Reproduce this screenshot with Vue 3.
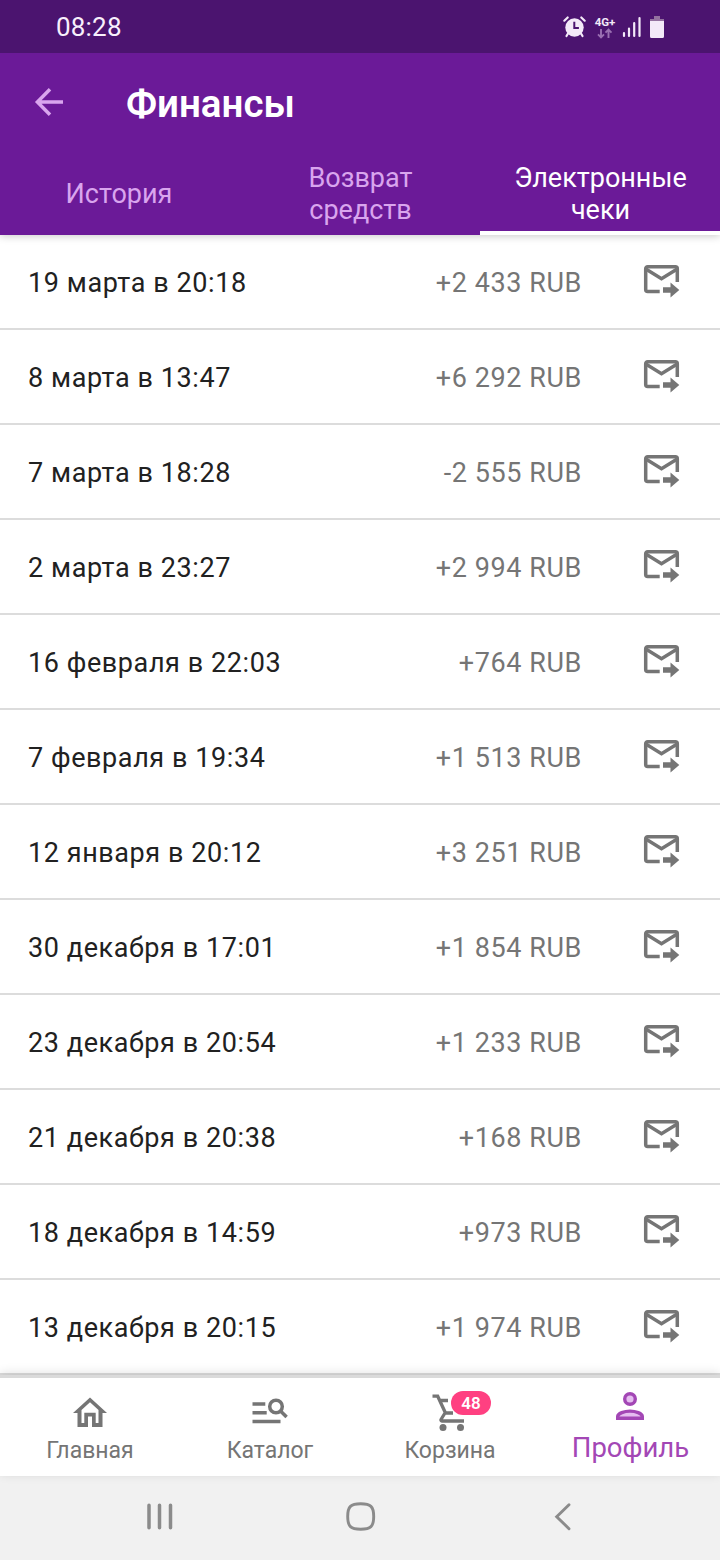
<script setup>
import { ref } from "vue"

const tabs = ["История", "Возврат средств", "Электронные чеки"]
const activeTab = ref(2)

const receipts = [
  { date: "19 марта в 20:18", sum: "+2 433 RUB" },
  { date: "8 марта в 13:47", sum: "+6 292 RUB" },
  { date: "7 марта в 18:28", sum: "-2 555 RUB" },
  { date: "2 марта в 23:27", sum: "+2 994 RUB" },
  { date: "16 февраля в 22:03", sum: "+764 RUB" },
  { date: "7 февраля в 19:34", sum: "+1 513 RUB" },
  { date: "12 января в 20:12", sum: "+3 251 RUB" },
  { date: "30 декабря в 17:01", sum: "+1 854 RUB" },
  { date: "23 декабря в 20:54", sum: "+1 233 RUB" },
  { date: "21 декабря в 20:38", sum: "+168 RUB" },
  { date: "18 декабря в 14:59", sum: "+973 RUB" },
  { date: "13 декабря в 20:15", sum: "+1 974 RUB" },
]
</script>

<template>
    <div class="screen">
        <div class="status-bar">
            <span class="clock">08:28</span>
            <div class="status-icons">
                <svg class="alarm" width="24" height="24" viewBox="0 0 24 24">
                    <circle cx="11.5" cy="12.5" r="9.2" fill="#f3e9f8" />
                    <path d="M5 18.5 3.5 21M18 18.5l1.5 2.5M1.3 5.7l3.4-3.2M21.7 5.7l-3.4-3.2" fill="none" stroke="#f3e9f8" stroke-width="2.2" stroke-linecap="round" />
                    <path d="M11.3 6.8v6.2h4.6" fill="none" stroke="#4b146f" stroke-width="2" />
                </svg>
                <div class="network">
                    <span>4G+</span>
                    <svg width="16" height="11" viewBox="0 0 16 11">
                        <path d="M4 1v8.4M1 6.3l3 3 3-3M11.5 10V1.4M8.5 4.6l3-3 3 3" fill="none" stroke="#9a70b2" stroke-width="1.9" />
                    </svg>
                </div>
                <svg class="signal" width="19" height="21" viewBox="0 0 19 21">
                    <path d="M2 17v3M7 12.5V20M12.2 7v13M17.5 2v18" fill="none" stroke="#f3e9f8" stroke-width="2.2" stroke-linecap="round" />
                </svg>
                <svg class="battery" width="14" height="22" viewBox="0 0 14 22">
                    <path d="M4 0h6v3h4v3H0V3h4z" fill="#93719f" />
                    <path d="M0 5h14v15.5a1.5 1.5 0 0 1-1.5 1.5h-11A1.5 1.5 0 0 1 0 20.5z" fill="#f3e9f8" />
                </svg>
            </div>
        </div>

        <header class="header">
            <div class="toolbar">
                <svg class="back" width="28" height="28" viewBox="0 0 28 28">
                    <path d="M15 1.2 2.4 14 15 26.8M2 14h26" fill="none" stroke="#d9a5ee" stroke-width="3.5" />
                </svg>
                <h1>Финансы</h1>
            </div>
            <div class="tabs">
                <button v-for="(tab, i) in tabs" :key="tab" class="tab" :class="{ active: i === activeTab }" @click="activeTab = i">
                    <span>{{ tab }}</span>
                </button>
            </div>
        </header>

        <ul class="list">
            <li v-for="item in receipts" :key="item.date" class="row">
                <span class="date">{{ item.date }}</span>
                <span class="sum">{{ item.sum }}</span>
                <svg class="mail" width="36" height="34" viewBox="0 0 36 34">
                    <path d="M15.7 26.5H3.7A2 2 0 0 1 1.7 24.5V3.7A2 2 0 0 1 3.7 1.7h27.6A2 2 0 0 1 33.3 3.7V17" fill="none" stroke="#757575" stroke-width="3.5" />
                    <path d="M2.2 4.2 17.5 13.7 32.8 4.2" fill="none" stroke="#757575" stroke-width="3.5" />
                    <path d="M19 22.3h7.5v-4.8l8.8 7.5-8.8 7.5v-4.8H19z" fill="#757575" />
                </svg>
            </li>
        </ul>

        <nav class="bottom-nav">
            <a class="nav-item">
                <svg width="36" height="36" viewBox="0 0 36 36">
                    <path fill-rule="evenodd" d="M18 3.5 1 19h4.5v14H16v-10.5h4V33h10.5V19H35zM18 8.3l8.5 7.7v13h-2.8V18.8H12.3V29H9.5V16z" fill="#757575" />
                </svg>
                <span>Главная</span>
            </a>
            <a class="nav-item">
                <svg width="36" height="36" viewBox="0 0 36 36">
                    <path d="M.5 10h12.8M.5 18.7h14.2M.5 27.4h28" fill="none" stroke="#757575" stroke-width="3.5" />
                    <circle cx="24" cy="12.5" r="6.3" fill="none" stroke="#757575" stroke-width="3.5" />
                    <path d="M28 16.5l6.6 6.6" fill="none" stroke="#757575" stroke-width="3.5" />
                </svg>
                <span>Каталог</span>
            </a>
            <a class="nav-item">
                <div class="cart">
                    <svg width="36" height="36" viewBox="0 0 36 36">
                        <path d="M.5 2.2h5.2L13.5 19h7.5M7 6.5h9M13.3 18.5 9 25.5a1 1 0 0 0 .9 1.5H32" fill="none" stroke="#757575" stroke-width="3.3" />
                        <circle cx="11" cy="33.5" r="3.5" fill="#757575" />
                        <circle cx="28.5" cy="33.5" r="3.5" fill="#757575" />
                    </svg>
                    <span class="badge">48</span>
                </div>
                <span>Корзина</span>
            </a>
            <a class="nav-item current">
                <svg width="36" height="36" viewBox="0 0 36 36">
                    <circle cx="18" cy="11" r="5.3" fill="#e5bdf0" stroke="#a347b5" stroke-width="3.4" />
                    <path d="M5.7 30.3v-1.8c0-3.3 6.8-5.4 12.3-5.4s12.3 2.1 12.3 5.4v1.8z" fill="#e5bdf0" stroke="#a347b5" stroke-width="3.4" />
                </svg>
                <span>Профиль</span>
            </a>
        </nav>

        <div class="system-nav">
            <svg width="28" height="28" viewBox="0 0 28 28">
                <path d="M3 2.3v22.5M13.5 2.3v22.5M24.5 2.3v22.5" fill="none" stroke="#8b8b8b" stroke-width="3.5" stroke-linecap="round" />
            </svg>
            <svg width="30" height="30" viewBox="0 0 30 30">
                <path d="M14.7 1.8C24.7 1.8 27.7 4.5 27.7 14.5S24.7 27.2 14.7 27.2 1.7 24.5 1.7 14.5 4.7 1.8 14.7 1.8z" fill="none" stroke="#8b8b8b" stroke-width="2.9" />
            </svg>
            <svg width="18" height="28" viewBox="0 0 18 28">
                <path d="M15 1.8 2.7 13.7l12.3 12" fill="none" stroke="#8b8b8b" stroke-width="2.9" stroke-linecap="round" />
            </svg>
        </div>
    </div>
</template>

<style>
body {
    margin: 0;
    background: #fff;
}
</style>

<style scoped>
.screen {
    width: 720px;
    height: 1560px;
    display: flex;
    flex-direction: column;
    overflow: hidden;
    background: #fff;
    font-family: Roboto, "Noto Sans", sans-serif;
}
.screen svg {
    display: block;
    flex: none;
    overflow: visible;
}
.status-bar {
    position: relative;
    z-index: 2;
    height: 53px;
    flex: none;
    box-sizing: border-box;
    padding: 0 56px;
    display: flex;
    justify-content: space-between;
    align-items: center;
    background: #4b146f;
}
.clock {
    color: #f8effc;
    font-size: 26px;
    letter-spacing: 0.2px;
    line-height: 54px;
}
.status-icons {
    display: flex;
    align-items: center;
}
.network {
    display: flex;
    flex-direction: column;
    align-items: center;
    width: 22px;
    margin: 1px 6px 0 7px;
    color: #f3e9f8;
    font-size: 11.5px;
    font-weight: 700;
    line-height: 12px;
}
.battery {
    margin-left: 9px;
}
.header {
    position: relative;
    z-index: 1;
    height: 182px;
    flex: none;
    display: flex;
    flex-direction: column;
    background: #6b1a98;
    box-shadow: 0 1px 8px rgba(0, 0, 0, 0.22);
}
.toolbar {
    height: 98px;
    display: flex;
    align-items: center;
    padding-left: 35px;
}
h1 {
    margin: 2px 0 0 63px;
    color: #fff;
    font-size: 38.5px;
    font-weight: 600;
}
.tabs {
    flex: 1;
    display: flex;
}
.tab {
    width: 240px;
    box-sizing: border-box;
    padding: 6px 23px 0 24px;
    border: 0;
    border-bottom: 4px solid transparent;
    background: none;
    color: #d9a5ee;
    font: 400 27px/32px Roboto, sans-serif;
}
.tab:first-child {
    padding-right: 26px;
}
.tab.active {
    color: #fff;
    border-bottom-color: #fff;
}
.list {
    flex: none;
    margin: 0;
    padding: 0;
    list-style: none;
}
.row {
    height: 95px;
    box-sizing: border-box;
    display: flex;
    align-items: center;
    padding: 2px 40px 0 28px;
    border-bottom: 2px solid #dcdcdc;
    font-size: 27px;
    letter-spacing: 0.58px;
}
.date {
    flex: 1;
    color: #212121;
}
.sum {
    color: #757575;
}
.mail {
    margin: 0 0 1px 62px;
}
.bottom-nav {
    position: relative;
    z-index: 1;
    height: 101px;
    flex: none;
    box-sizing: border-box;
    display: flex;
    background: #fff;
    border-top: 3px solid #dadada;
    box-shadow: 0 -2px 10px rgba(0, 0, 0, 0.12);
}
.nav-item {
    flex: 1 1 0;
    display: flex;
    flex-direction: column;
    align-items: center;
    padding-top: 16px;
    color: #757575;
    font-size: 23px;
    line-height: 28px;
}
.nav-item > span {
    margin-top: 7px;
}
.nav-item.current {
    padding-top: 10px;
    color: #a347b5;
    font-size: 27.5px;
}
.nav-item.current > span {
    margin: 10px 0 0 1px;
}
.cart {
    position: relative;
}
.badge {
    position: absolute;
    left: 19px;
    top: -3px;
    width: 40px;
    height: 24px;
    border-radius: 12px;
    background: #ff4081;
    color: #fff;
    font-size: 17px;
    font-weight: 600;
    line-height: 25px;
    text-align: center;
}
.system-nav {
    height: 84px;
    flex: none;
    box-sizing: border-box;
    padding: 0 148px 3px 146px;
    display: flex;
    align-items: center;
    gap: 172px;
    background: #f1f1f1;
}
.system-nav svg:last-child {
    margin-left: 6px;
}
</style>
